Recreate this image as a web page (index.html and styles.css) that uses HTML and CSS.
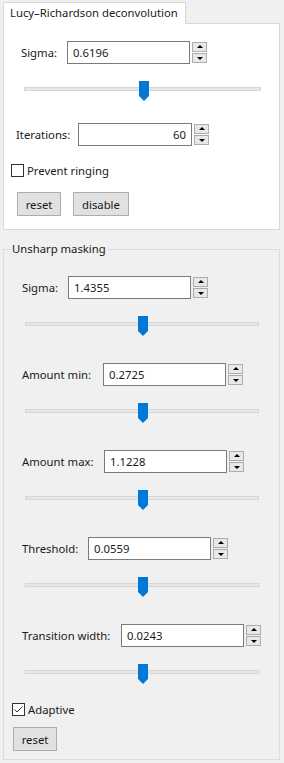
FILE: index.html
```html
<!DOCTYPE html>
<html lang="en">
<head>
    <meta charset="UTF-8">
    <meta name="viewport" content="width=device-width, initial-scale=1.0">
    <title>Sharpening</title>
    <link rel="stylesheet" href="styles.css">
</head>
<body>

<div class="panel">
    <!-- Deconvolution tab -->
    <div class="tab-bar">
        <div class="tab">Lucy–Richardson deconvolution</div>
    </div>
    <div class="tab-pane">
        <div class="spin-row lucy-sigma">
            <label class="lbl w46">Sigma:</label>
            <input class="num" type="text" value="0.6196">
            <div class="spin-btns"><span class="up"></span><span class="down"></span></div>
        </div>
        <div class="slider first"><div class="groove"></div><svg class="handle" width="10" height="20" viewBox="0 0 10 20"><polygon points="0,0 10,0 10,15 5,20 0,15"/></svg></div>
        <div class="spin-row iterations">
            <label class="lbl w62">Iterations:</label>
            <input class="num narrow right" type="text" value="60">
            <div class="spin-btns"><span class="up"></span><span class="down"></span></div>
        </div>
        <label class="check-row ringing"><span class="box"></span>Prevent ringing</label>
        <div class="btn-row">
            <button class="btn reset">reset</button>
            <button class="btn disable">disable</button>
        </div>
    </div>

    <!-- Unsharp masking group -->
    <fieldset class="group">
        <legend>Unsharp masking</legend>
        <div class="spin-row">
            <label class="lbl w46">Sigma:</label>
            <input class="num" type="text" value="1.4355">
            <div class="spin-btns"><span class="up"></span><span class="down"></span></div>
        </div>
        <div class="slider"><div class="groove"></div><svg class="handle" width="10" height="20" viewBox="0 0 10 20"><polygon points="0,0 10,0 10,15 5,20 0,15"/></svg></div>

        <div class="spin-row">
            <label class="lbl w81">Amount min:</label>
            <input class="num" type="text" value="0.2725">
            <div class="spin-btns"><span class="up"></span><span class="down"></span></div>
        </div>
        <div class="slider"><div class="groove"></div><svg class="handle" width="10" height="20" viewBox="0 0 10 20"><polygon points="0,0 10,0 10,15 5,20 0,15"/></svg></div>

        <div class="spin-row">
            <label class="lbl w82">Amount max:</label>
            <input class="num" type="text" value="1.1228">
            <div class="spin-btns"><span class="up"></span><span class="down"></span></div>
        </div>
        <div class="slider"><div class="groove"></div><svg class="handle" width="10" height="20" viewBox="0 0 10 20"><polygon points="0,0 10,0 10,15 5,20 0,15"/></svg></div>

        <div class="spin-row">
            <label class="lbl w66">Threshold:</label>
            <input class="num" type="text" value="0.0559">
            <div class="spin-btns"><span class="up"></span><span class="down"></span></div>
        </div>
        <div class="slider"><div class="groove"></div><svg class="handle" width="10" height="20" viewBox="0 0 10 20"><polygon points="0,0 10,0 10,15 5,20 0,15"/></svg></div>

        <div class="spin-row">
            <label class="lbl w99">Transition width:</label>
            <input class="num" type="text" value="0.0243">
            <div class="spin-btns"><span class="up"></span><span class="down"></span></div>
        </div>
        <div class="slider"><div class="groove"></div><svg class="handle" width="10" height="20" viewBox="0 0 10 20"><polygon points="0,0 10,0 10,15 5,20 0,15"/></svg></div>

        <label class="check-row adaptive"><span class="box checked"><svg width="11" height="11" viewBox="0 0 11 11"><polyline points="1.5,5.5 4,8 9.5,2.5"/></svg></span>Adaptive</label>
        <div class="btn-row last">
            <button class="btn reset">reset</button>
        </div>
    </fieldset>
</div>

</body>
</html>
```

FILE: styles.css
```css
* {
    margin: 0;
    padding: 0;
    box-sizing: border-box;
}

body {
    font-family: "Segoe UI", "Noto Sans", sans-serif;
    font-size: 11.3px;
    line-height: 16px;
    color: #1a1a1a;
    background-color: #f0f0f0;
}

.panel {
    width: 277px;
    margin: 2px 0 0 3px;
    display: flex;
    flex-direction: column;
}

/* Tab header */
.tab-bar {
    display: flex;
    height: 21px;
}

.tab {
    position: relative;
    z-index: 1;
    height: 22px;
    padding: 2px 7px 0 6px;
    background-color: #fff;
    border: 1px solid #d9d9d9;
    border-bottom: none;
}

.tab-pane {
    background-color: #fff;
    border: 1px solid #d9d9d9;
    padding: 17px 0 13px 0;
    display: flex;
    flex-direction: column;
}

/* Spin box rows */
.spin-row {
    display: flex;
    align-items: center;
    height: 23px;
    margin-left: 18px;
}

.spin-row.lucy-sigma {
    margin-left: 17px;
}

.spin-row.iterations {
    margin-left: 12px;
    margin-top: 22px;
}

.lbl {
    flex: none;
    white-space: nowrap;
}

.w46 { width: 46px; }
.w62 { width: 62px; }
.w66 { width: 66px; }
.w81 { width: 81px; }
.w82 { width: 82px; }
.w99 { width: 99px; }

.num {
    width: 123px;
    height: 23px;
    border: 1px solid #7a7a7a;
    background-color: #fff;
    font-family: inherit;
    font-size: 11.3px;
    color: #1a1a1a;
    padding: 0 5px;
    outline: none;
}

.num.narrow {
    width: 114px;
}

.num.right {
    text-align: right;
}

.spin-btns {
    display: flex;
    flex-direction: column;
    gap: 1px;
    margin-left: 2px;
    height: 23px;
    padding-top: 1px;
}

.spin-btns span {
    position: relative;
    width: 15px;
    height: 10px;
    background-color: #e8e8e8;
    border: 1px solid #adadad;
}

.spin-btns span::after {
    content: "";
    position: absolute;
    left: 4px;
    width: 0;
    height: 0;
    border-left: 3px solid transparent;
    border-right: 3px solid transparent;
}

.spin-btns .up::after {
    top: 2px;
    border-bottom: 3px solid #000;
}

.spin-btns .down::after {
    top: 3px;
    border-top: 3px solid #000;
}

/* Sliders */
.slider {
    position: relative;
    height: 20px;
    margin: 17px 20px 27px 21px;
}

.slider.first {
    margin: 17px 18px 0 20px;
}

.groove {
    margin-top: 6px;
    height: 4px;
    background-color: #e7e7e7;
    border: 1px solid #d6d6d6;
}

.handle {
    position: absolute;
    top: 0;
    left: calc(50% - 4px);
    fill: #0078d7;
}

/* Check boxes */
.check-row {
    display: flex;
    align-items: center;
    height: 17px;
    margin: 16px 0 0 7px;
}

.check-row.adaptive {
    margin: -10px 0 0 8px;
}

.box {
    width: 13px;
    height: 13px;
    border: 1px solid #333;
    background-color: #fff;
    margin-right: 3px;
    display: flex;
    align-items: center;
    justify-content: center;
}

.box svg {
    fill: none;
    stroke: #333;
    stroke-width: 1;
}

/* Buttons */
.btn-row {
    display: flex;
    gap: 12px;
    margin: 13px 0 0 13px;
}

.btn-row.last {
    margin: 9px 0 0 9px;
}

.btn {
    height: 24px;
    background-color: #e1e1e1;
    border: 1px solid #adadad;
    font-family: inherit;
    font-size: 11.3px;
    color: #1a1a1a;
}

.btn.reset {
    width: 44px;
}

.btn.disable {
    width: 56px;
}

/* Group box */
.group {
    margin-top: 11px;
    border: 1px solid #dcdcdc;
    padding: 19px 0 8px 0;
    display: flex;
    flex-direction: column;
}

.group legend {
    margin-left: 6px;
    padding: 0 2px;
}
```
